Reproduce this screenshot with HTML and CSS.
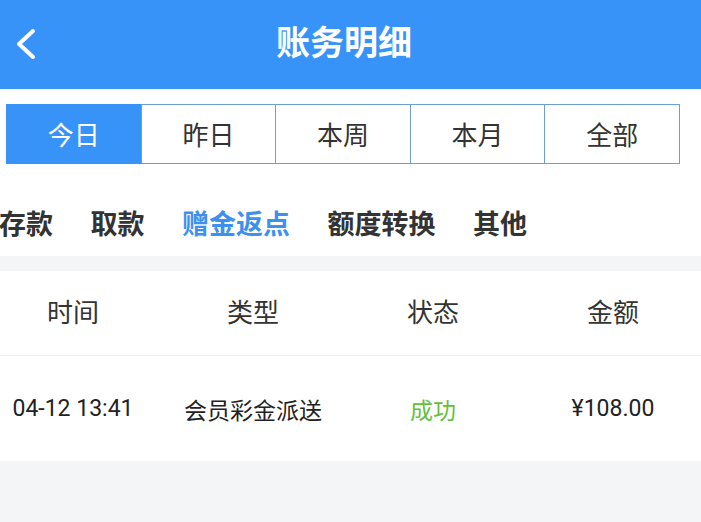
FILE: index.html
```html
<!DOCTYPE html>
<html lang="zh">
<head>
<meta charset="utf-8">
<link rel="stylesheet" href="styles.css">
</head>
<body>
<div class="page">
  <header class="topbar">
    <svg class="back" width="24" height="34" viewBox="0 0 24 34"><path d="M19 4 L5 17 L19 30" fill="none" stroke="#fff" stroke-width="4" stroke-linecap="round" stroke-linejoin="round"/></svg>
    <h1 class="title">账务明细</h1>
  </header>
  <div class="tabs">
    <div class="tab active">今日</div>
    <div class="tab">昨日</div>
    <div class="tab">本周</div>
    <div class="tab">本月</div>
    <div class="tab">全部</div>
  </div>
  <nav class="cats">
    <span class="cat">存款</span>
    <span class="cat">取款</span>
    <span class="cat on">赠金返点</span>
    <span class="cat">额度转换</span>
    <span class="cat">其他</span>
  </nav>
  <div class="gap"></div>
  <div class="table">
    <div class="row head">
      <div class="cell">时间</div>
      <div class="cell">类型</div>
      <div class="cell">状态</div>
      <div class="cell">金额</div>
    </div>
    <div class="row data">
      <div class="cell num">04-12 13:41</div>
      <div class="cell">会员彩金派送</div>
      <div class="cell ok">成功</div>
      <div class="cell num">¥108.00</div>
    </div>
  </div>
</div>
</body>
</html>
```
FILE: styles.css
```css
* { box-sizing: border-box; margin: 0; padding: 0; }
html, body { width: 701px; height: 522px; overflow: hidden; }
body {
  background: #f4f5f7;
  font-family: Roboto, "Noto Sans CJK SC", sans-serif;
  color: #333;
}
.page { display: flex; flex-direction: column; min-height: 522px; }
.topbar {
  height: 89px;
  background: #3893f8;
  display: flex;
  align-items: center;
  justify-content: center;
  position: relative;
}
.back { position: absolute; left: 14px; top: 27px; }
.title {
  color: #fff;
  font-size: 34px;
  font-weight: 700;
  line-height: 1;
  margin-left: -13px;
  margin-top: -3px;
}
.tabs {
  background: #fff;
  padding: 15px 21px 0 6px;
  display: flex;
}
.tab {
  flex: 1;
  height: 60px;
  display: flex;
  align-items: center;
  justify-content: center;
  font-size: 26px;
  color: #333;
  border: 1px solid #6a9fd0;
  border-left: none;
  padding-bottom: 2px;
}
.tab:first-child { border-left: 1px solid #6a9fd0; }
.tab.active { background: #3893f8; color: #fff; border-color: #3893f8; border-right-color: #6a9fd0; }
.cats {
  background: #fff;
  height: 92px;
  display: flex;
  align-items: center;
  gap: 37.5px;
  margin-left: -1px;
  padding-top: 24px;
}
.cat { font-size: 27px; font-weight: 700; color: #333; }
.cat.on { color: #3d91ee; }
.gap { height: 15px; background: #f4f5f7; }
.table { background: #fff; }
.row {
  display: grid;
  grid-template-columns: repeat(4, 180px);
  margin-left: -17px;
  align-items: center;
}
.row.head { height: 85px; border-bottom: 1px solid #f1f1f1; font-size: 26px; color: #333; padding-bottom: 5px; }
.row.data { height: 105px; font-size: 23px; color: #222; }
.cell { text-align: center; }
.num { font-size: 23px; }
.ok { color: #67bf3a; }
```
